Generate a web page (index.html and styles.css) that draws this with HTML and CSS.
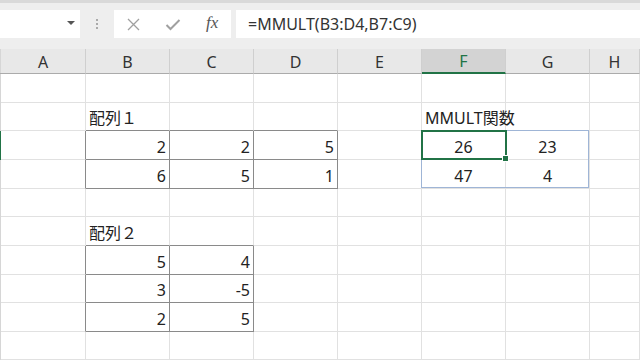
FILE: index.html
```html
<!DOCTYPE html>
<html lang="ja">
<head>
  <meta charset="UTF-8" />
  <title>MMULT関数</title>
  <link rel="stylesheet" href="styles.css">
</head>
<body>
  <div class="formulabar">
    <div class="namebox"><span class="arrow"></span></div>
    <div class="grip"><i></i><i></i><i></i></div>
    <div class="fbuttons">
      <svg class="ico" viewBox="0 0 13 13" width="13" height="13"><path d="M1 1 L12 12 M12 1 L1 12" stroke="#a0a0a0" stroke-width="1.3" fill="none"/></svg>
      <svg class="ico" viewBox="0 0 16 13" width="16" height="13"><path d="M1.5 7 L5.5 11 L14.5 2" stroke="#a0a0a0" stroke-width="2" fill="none"/></svg>
      <span class="fx">fx</span>
    </div>
    <div class="finput">=MMULT(B3:D4,B7:C9)</div>
  </div>

  <div class="sheet">
    <div class="grid">
      <div class="stub head"></div>
      <div class="colhead">A</div>
      <div class="colhead">B</div>
      <div class="colhead">C</div>
      <div class="colhead">D</div>
      <div class="colhead">E</div>
      <div class="colhead active">F</div>
      <div class="colhead">G</div>
      <div class="colhead">H</div>

      <!-- row 2 -->
      <div class="stub"></div>
      <div class="cell"></div><div class="cell"></div><div class="cell"></div><div class="cell"></div>
      <div class="cell"></div><div class="cell"></div><div class="cell"></div><div class="cell"></div>

      <!-- row 3 -->
      <div class="stub"></div>
      <div class="cell"></div>
      <div class="cell bb">配列１</div><div class="cell bb"></div><div class="cell bb"></div>
      <div class="cell"></div>
      <div class="cell">MMULT関数</div><div class="cell"></div><div class="cell"></div>

      <!-- row 4 -->
      <div class="stub sel"></div>
      <div class="cell br"></div>
      <div class="cell num bb br">2</div><div class="cell num bb br">2</div><div class="cell num bb br">5</div>
      <div class="cell"></div>
      <div class="cell mid">26</div><div class="cell mid">23</div><div class="cell"></div>

      <!-- row 5 -->
      <div class="stub"></div>
      <div class="cell br"></div>
      <div class="cell num bb br">6</div><div class="cell num bb br">5</div><div class="cell num bb br">1</div>
      <div class="cell"></div>
      <div class="cell mid">47</div><div class="cell mid">4</div><div class="cell"></div>

      <!-- row 6 -->
      <div class="stub"></div>
      <div class="cell"></div><div class="cell"></div><div class="cell"></div><div class="cell"></div>
      <div class="cell"></div><div class="cell"></div><div class="cell"></div><div class="cell"></div>

      <!-- row 7 -->
      <div class="stub"></div>
      <div class="cell"></div>
      <div class="cell bb">配列２</div><div class="cell bb"></div><div class="cell"></div>
      <div class="cell"></div><div class="cell"></div><div class="cell"></div><div class="cell"></div>

      <!-- row 8 -->
      <div class="stub"></div>
      <div class="cell br"></div>
      <div class="cell num bb br">5</div><div class="cell num bb br">4</div><div class="cell"></div>
      <div class="cell"></div><div class="cell"></div><div class="cell"></div><div class="cell"></div>

      <!-- row 9 -->
      <div class="stub"></div>
      <div class="cell br"></div>
      <div class="cell num bb br">3</div><div class="cell num bb br">-5</div><div class="cell"></div>
      <div class="cell"></div><div class="cell"></div><div class="cell"></div><div class="cell"></div>

      <!-- row 10 -->
      <div class="stub"></div>
      <div class="cell br"></div>
      <div class="cell num bb br">2</div><div class="cell num bb br">5</div><div class="cell"></div>
      <div class="cell"></div><div class="cell"></div><div class="cell"></div><div class="cell"></div>

      <!-- row 11 -->
      <div class="stub"></div>
      <div class="cell"></div><div class="cell"></div><div class="cell"></div><div class="cell"></div>
      <div class="cell"></div><div class="cell"></div><div class="cell"></div><div class="cell"></div>
    </div>

    <div class="range"></div>
    <div class="active-cell"><span class="handle"></span></div>
  </div>
</body>
</html>
```

FILE: styles.css
```css
body {
  margin: 0;
  width: 640px;
  height: 360px;
  overflow: hidden;
  background: #fff;
  font-family: "Noto Sans", "Noto Sans CJK JP", sans-serif;
  color: #222;
}
.formulabar {
  display: flex;
  height: 49px;
  box-sizing: border-box;
  background: #eeeeee;
  border-top: 3px solid #d9d9d9;
  padding-top: 7px;
}
.namebox {
  width: 80px;
  height: 28px;
  background: #fff;
  position: relative;
}
.arrow {
  position: absolute;
  left: 67px;
  top: 11px;
  border-left: 4px solid transparent;
  border-right: 4px solid transparent;
  border-top: 4px solid #555;
}
.grip {
  width: 34px;
  display: flex;
  flex-direction: column;
  align-items: center;
  justify-content: center;
  gap: 2px;
  height: 28px;
}
.grip i {
  width: 2px;
  height: 2px;
  background: #aaa;
}
.fbuttons {
  width: 117px;
  height: 28px;
  background: #fff;
  display: flex;
  align-items: center;
  gap: 25px;
  padding-left: 13px;
  box-sizing: border-box;
}
.fx {
  font-family: "Liberation Serif", serif;
  font-style: italic;
  font-size: 17px;
  color: #555;
  margin-top: -2px;
}
.finput {
  margin-left: 5px;
  flex: 1;
  height: 28px;
  background: #fff;
  padding-left: 12px;
  font-size: 16px;
  line-height: 28px;
  color: #333;
}
.sheet {
  position: relative;
}
.grid {
  display: grid;
  grid-template-columns: 1px 85px repeat(6, 84px) 50px;
  grid-template-rows: 25px 29px 28px 29px 29px 28px 29px 29px 28px 29px 28px;
}
.stub {
  background: #d6d6d6;
}
.stub.head {
  border-bottom: 1px solid #ababab;
}
.stub.sel {
  background: #217346;
}
.colhead {
  background: #e8e8e8;
  border-right: 1px solid #cfcfcf;
  border-bottom: 1px solid #ababab;
  box-sizing: border-box;
  font-size: 16px;
  color: #333;
  display: flex;
  align-items: center;
  justify-content: center;
  line-height: 1;
  padding-top: 1px;
}
.colhead.active {
  background: #d3d3d3;
  color: #217346;
  border-bottom: 2px solid #217346;
}
.cell {
  border-right: 1px solid #e1e1e1;
  border-bottom: 1px solid #e1e1e1;
  box-sizing: border-box;
  font-size: 16px;
  line-height: 1;
  display: flex;
  align-items: flex-end;
  padding: 0 3px 4px 3px;
  white-space: nowrap;
}
.cell.bb {
  border-bottom-color: #8a8a8a;
}
.cell.br {
  border-right-color: #8a8a8a;
}
.num {
  justify-content: flex-end;
}
.mid {
  justify-content: center;
}
.range {
  position: absolute;
  left: 421px;
  top: 81px;
  width: 168px;
  height: 58px;
  border: 1px solid #9fb5d6;
  box-sizing: border-box;
}
.active-cell {
  position: absolute;
  left: 421px;
  top: 81px;
  width: 86px;
  height: 30px;
  border: 2px solid #217346;
  box-sizing: border-box;
}
.handle {
  position: absolute;
  right: -4px;
  bottom: -4px;
  width: 5px;
  height: 5px;
  background: #217346;
  border: 1px solid #fff;
}
```
